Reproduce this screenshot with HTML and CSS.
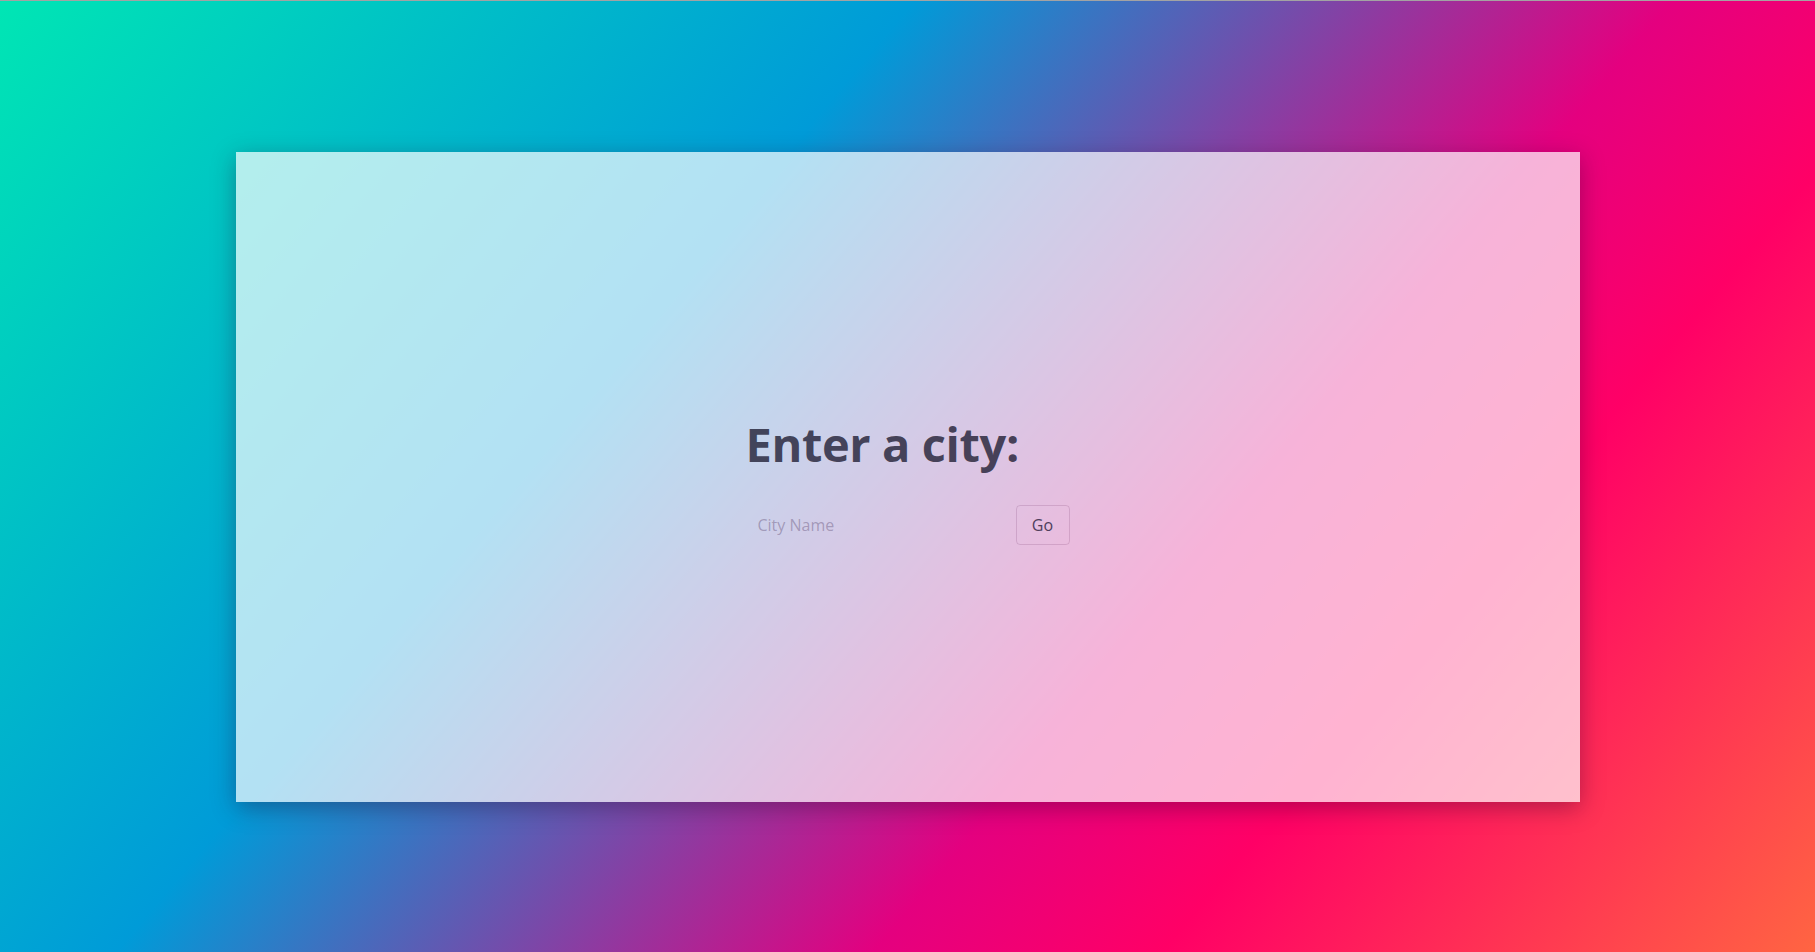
FILE: index.html
```html
<!DOCTYPE html>
<html lang="en">
<head>
<meta charset="utf-8">
<title>Weather</title>
<link rel="stylesheet" href="styles.css">
</head>
<body>
<main class="card">
  <div class="search">
    <h1 class="title">Enter a city:</h1>
    <form class="form">
      <input class="city" type="text" placeholder="City Name">
      <button class="go" type="button">Go</button>
    </form>
  </div>
</main>
</body>
</html>
```

FILE: styles.css
```css
html, body {
  margin: 0;
  padding: 0;
  height: 100%;
}
body {
  box-sizing: border-box;
  border-top: 1px solid #a3a3a3;
  background: linear-gradient(130deg, #00e6b4 0%, #009bd8 35%, #e4007f 64%, #ff0066 75%, #ff6542 100%);
  display: flex;
  align-items: center;
  justify-content: center;
  font-family: "Open Sans", "Noto Sans", sans-serif;
  overflow: hidden;
}
.card {
  width: 1344px;
  height: 650px;
  background: rgba(255, 255, 255, 0.7);
  box-shadow: 0 6px 22px rgba(40, 0, 40, 0.35);
  display: flex;
  align-items: center;
  justify-content: center;
}
.search {
  display: flex;
  flex-direction: column;
  margin-top: 10px;
}
.title {
  margin: 0 0 35px;
  font-size: 47px;
  line-height: 51px;
  font-weight: 700;
  color: rgba(30, 28, 50, 0.8);
  letter-spacing: -0.4px;
}
.form {
  display: flex;
  align-items: center;
  gap: 10px;
  margin: 0;
}
.city {
  width: 260px;
  height: 40px;
  box-sizing: border-box;
  border: none;
  background: transparent;
  padding: 0 12px;
  font-family: inherit;
  font-size: 16px;
  color: #4f3e5c;
  outline: none;
}
.city::placeholder {
  color: rgba(90, 70, 110, 0.4);
}
.go {
  width: 54px;
  height: 40px;
  box-sizing: border-box;
  border: 1px solid rgba(120, 60, 110, 0.2);
  border-radius: 4px;
  background: transparent;
  font-family: inherit;
  font-size: 16px;
  color: #4f3e5c;
  cursor: pointer;
  padding: 0;
}
```
